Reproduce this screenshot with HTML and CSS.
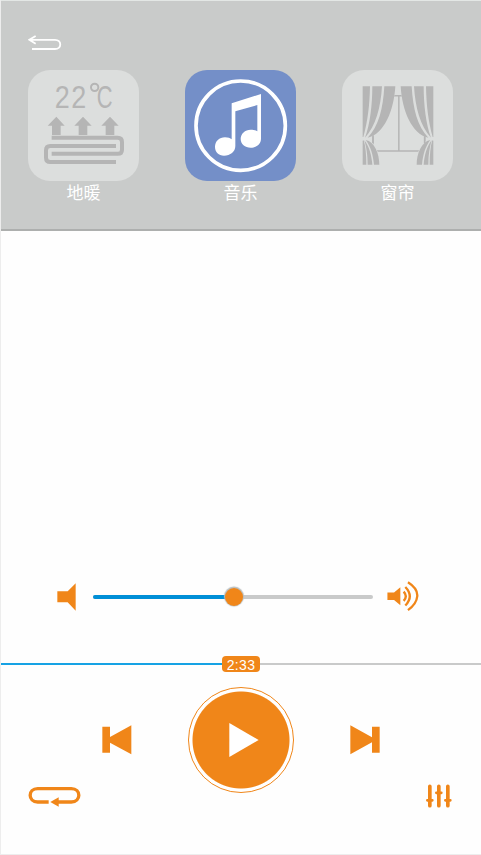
FILE: index.html
```html
<!DOCTYPE html>
<html lang="zh-CN">
<head>
<meta charset="utf-8">
<title>音乐</title>
<link rel="stylesheet" href="styles.css">
</head>
<body>
<main class="screen">
  <header class="top">
    <svg class="back" viewBox="84 105 102 48" aria-label="返回"><path d="M107 108 88 119.500 107 131M90 119.500H165C186 119.500 186 147 165 147H96"/></svg>
    <nav class="tabs">
      <a class="tab">
        <svg class="tile" viewBox="84 210 333 333">
          <g class="temp"><text transform="translate(164 324) scale(.86 1)">2</text><text transform="translate(214 324) scale(.86 1)">2</text>
          <text transform="translate(290 324) scale(.7 1)">C</text></g>
          <circle class="pipe thin" cx="284" cy="262" r="11"/>
          <path class="fill" d="M169 350 194 377H182V405H156V377H143ZM249 350 275 377H262V405H236V377H223ZM330 350 356 377H343V405H317V377H304Z"/>
          <path class="pipe" d="M155 413H353Q366 413 366 426V449Q366 461.500 353 461.500H155M348 438H151Q138 438 138 451V473Q138 486 151 486H348"/>
        </svg>
        <span>地暖</span>
      </a>
      <a class="tab active">
        <svg class="tile" viewBox="45 29 333 333">
          <circle class="ring" cx="212" cy="196" r="134"/>
          <path class="note" d="M185 129 273 101V235C273 251 259 262 242 262 225 262 212 251 212 236 212 220 225 208 242 208 251 208 258 210 262 213V134L196 153V257C196 274 181 286 162 286 146 286 135 275 135 260 135 243 148 231 165 231 174 231 181 233 185 237Z"/>
        </svg>
        <span>音乐</span>
      </a>
      <a class="tab">
        <svg class="tile" viewBox="35 29 333 333">
          <path class="frame" d="M128 106H283V272H128ZM205.500 106V272"/>
          <g id="drape">
            <path class="gap" d="M96 78H195C191 145 164 225 103 235 135 242 148 276 147 313H97Z"/>
            <path class="fill" d="M97 78H119C118 135 112 185 99 230H97ZM126 78H155C151 143 136 197 104 232 119 193 126 134 126 78ZM162 78H195C191 149 162 222 112 232 145 197 158 147 162 78ZM97 241 100 240C106 259 108 284 108 313H97ZM102 240C116 257 124 285 126 313H112C112 283 108 260 102 240ZM106 239C133 244 147 281 147 313H131C128 281 120 257 106 239Z"/>
          </g>
          <use href="#drape" transform="translate(406 0) scale(-1 1)"/>
          <path class="frame" d="M128 228V248M283 228V248"/>
        </svg>
        <span>窗帘</span>
      </a>
    </nav>
  </header>
  <section class="player">
    <div class="volume">
      <svg class="quiet" viewBox="0 0 57 84"><path d="M1 25H32L56 1V83L32 58H1Z"/></svg>
      <div class="slider"><div class="level"></div><div class="knob"></div></div>
      <svg class="loud" viewBox="113 34 96 92"><path d="M114 69H134L153 53V107L134 91H114Z"/><path class="wave" d="M163 66Q176 80 163 94M168 52Q195 80 168 108M176 38Q206 57 204 80T176 122"/></svg>
    </div>
    <div class="progress"><div class="played"></div><span class="time">2:33</span><div class="remaining"></div></div>
    <div class="controls">
      <svg class="skip" viewBox="0 0 90 90"><path d="M1 5H24V36L88 1V88L24 53V83H1Z"/></svg>
      <div class="play"><svg viewBox="0 0 90 102"><path d="M1 0 89 51 1 102Z"/></svg></div>
      <svg class="skip" viewBox="0 0 90 90"><path d="M1 1 66 37V5H89V83H66V52L1 88Z"/></svg>
    </div>
    <div class="options">
      <svg class="repeat" viewBox="85 47 159 62"><path class="line" d="M147 95H114C84 95 84 55 114 55H215C245 55 245 95 215 95H174"/><path d="M152 95 177 81V109Z"/></svg>
      <svg class="mixer" viewBox="77 43 78 72"><path d="M88.500 50V108M115.500 50V108M142.500 50V108"/><path class="bar" d="M81 92H96M108 69.500H123M135 92H150"/></svg>
    </div>
  </section>
</main>
</body>
</html>
```
FILE: styles.css
```css
* { box-sizing: border-box; }
body { margin: 0; background: #fefefe; }
svg { display: block; flex: none; }
.screen {
  height: 855px;
  border: 1px solid #ededed;
  border-width: 0 0 1px 1px;
  display: flex;
  flex-direction: column;
}
.top {
  height: 231px;
  padding-top: 35px;
  background: #c9cbca;
  border-top: 1px solid #e3e7e5;
  border-bottom: 2px solid #adafae;
}
.back { width: 34px; height: 16px; margin: -1px 0 0 27px; fill: none; stroke: #fff; stroke-width: 5.5; }
.tabs { display: flex; justify-content: space-between; padding: 0 28px 0 27px; margin-top: 19px; }
.tab { width: 111px; text-align: center; color: #fff; font: 17px/24px "Noto Sans CJK SC", sans-serif; }
.tab span { display: block; margin-top: -.6px; }
.tile { width: 111px; height: 111px; border-radius: 22px; background: #dcdedd; }
.active .tile { background: #748fc8; }
.fill { fill: #b5b5b5; }
.temp { font: 94px "Liberation Sans", sans-serif; fill: #b5b5b5; }
.pipe { fill: none; stroke: #b5b5b5; stroke-width: 12; }
.thin { stroke-width: 6; }
.ring { fill: none; stroke: #fff; stroke-width: 11; }
.note { fill: #fff; }
.frame { fill: none; stroke: #b5b5b5; stroke-width: 4.5; }
.gap { fill: #dcdedd; }
.player { flex: 1; display: flex; flex-direction: column; justify-content: flex-end; fill: #f08619; }
.volume { height: 31px; display: flex; align-items: center; padding-left: 56px; }
.quiet { width: 19px; height: 28px; }
.slider { display: flex; align-items: center; width: 280px; height: 4px; margin: 0 14px 0 17px; border-radius: 2px; background: #c9caca; }
.level { width: 132px; height: 4px; border-radius: 2px 0 0 2px; background: #008fd7; }
.knob { width: 18px; height: 18px; border-radius: 50%; background: #f08619; box-shadow: 0 -.5px 1px 1px #b9bdbd; }
.loud { width: 32px; height: 30.500px; }
.wave { fill: none; stroke: #f08619; stroke-width: 7; }
.progress { display: flex; align-items: center; height: 16px; margin-top: 44px; }
.played { width: 221px; height: 2px; background: #16a2e4; }
.remaining { flex: 1; height: 2px; background: #c9caca; }
.time { width: 38px; height: 16px; border-radius: 4px; background: #f08619; color: #fff; text-align: center; font: 14px/18px "Liberation Sans", sans-serif; letter-spacing: .3px; }
.controls { display: flex; justify-content: space-between; align-items: center; padding: 0 101px; height: 105px; margin-top: 15px; }
.skip { width: 30px; height: 30px; }
.play { width: 106px; height: 106px; border: 1.500px solid #f08619; border-radius: 50%; display: flex; align-items: center; justify-content: center; background: radial-gradient(circle, #f08619 48px, #fff 49px); }
.play svg { width: 30px; height: 34px; margin-left: 5px; fill: #fff; }
.options { display: flex; justify-content: space-between; align-items: flex-start; height: 70px; padding: 0 29px 0 27px; margin-top: -8px; }
.repeat { width: 53px; height: 20.700px; margin-top: 2px; }
.line { fill: none; stroke: #f08619; stroke-width: 10; }
.mixer { width: 26px; height: 24px; stroke: #f08619; stroke-width: 11; stroke-linecap: round; }
.bar { stroke-width: 8; }
```
